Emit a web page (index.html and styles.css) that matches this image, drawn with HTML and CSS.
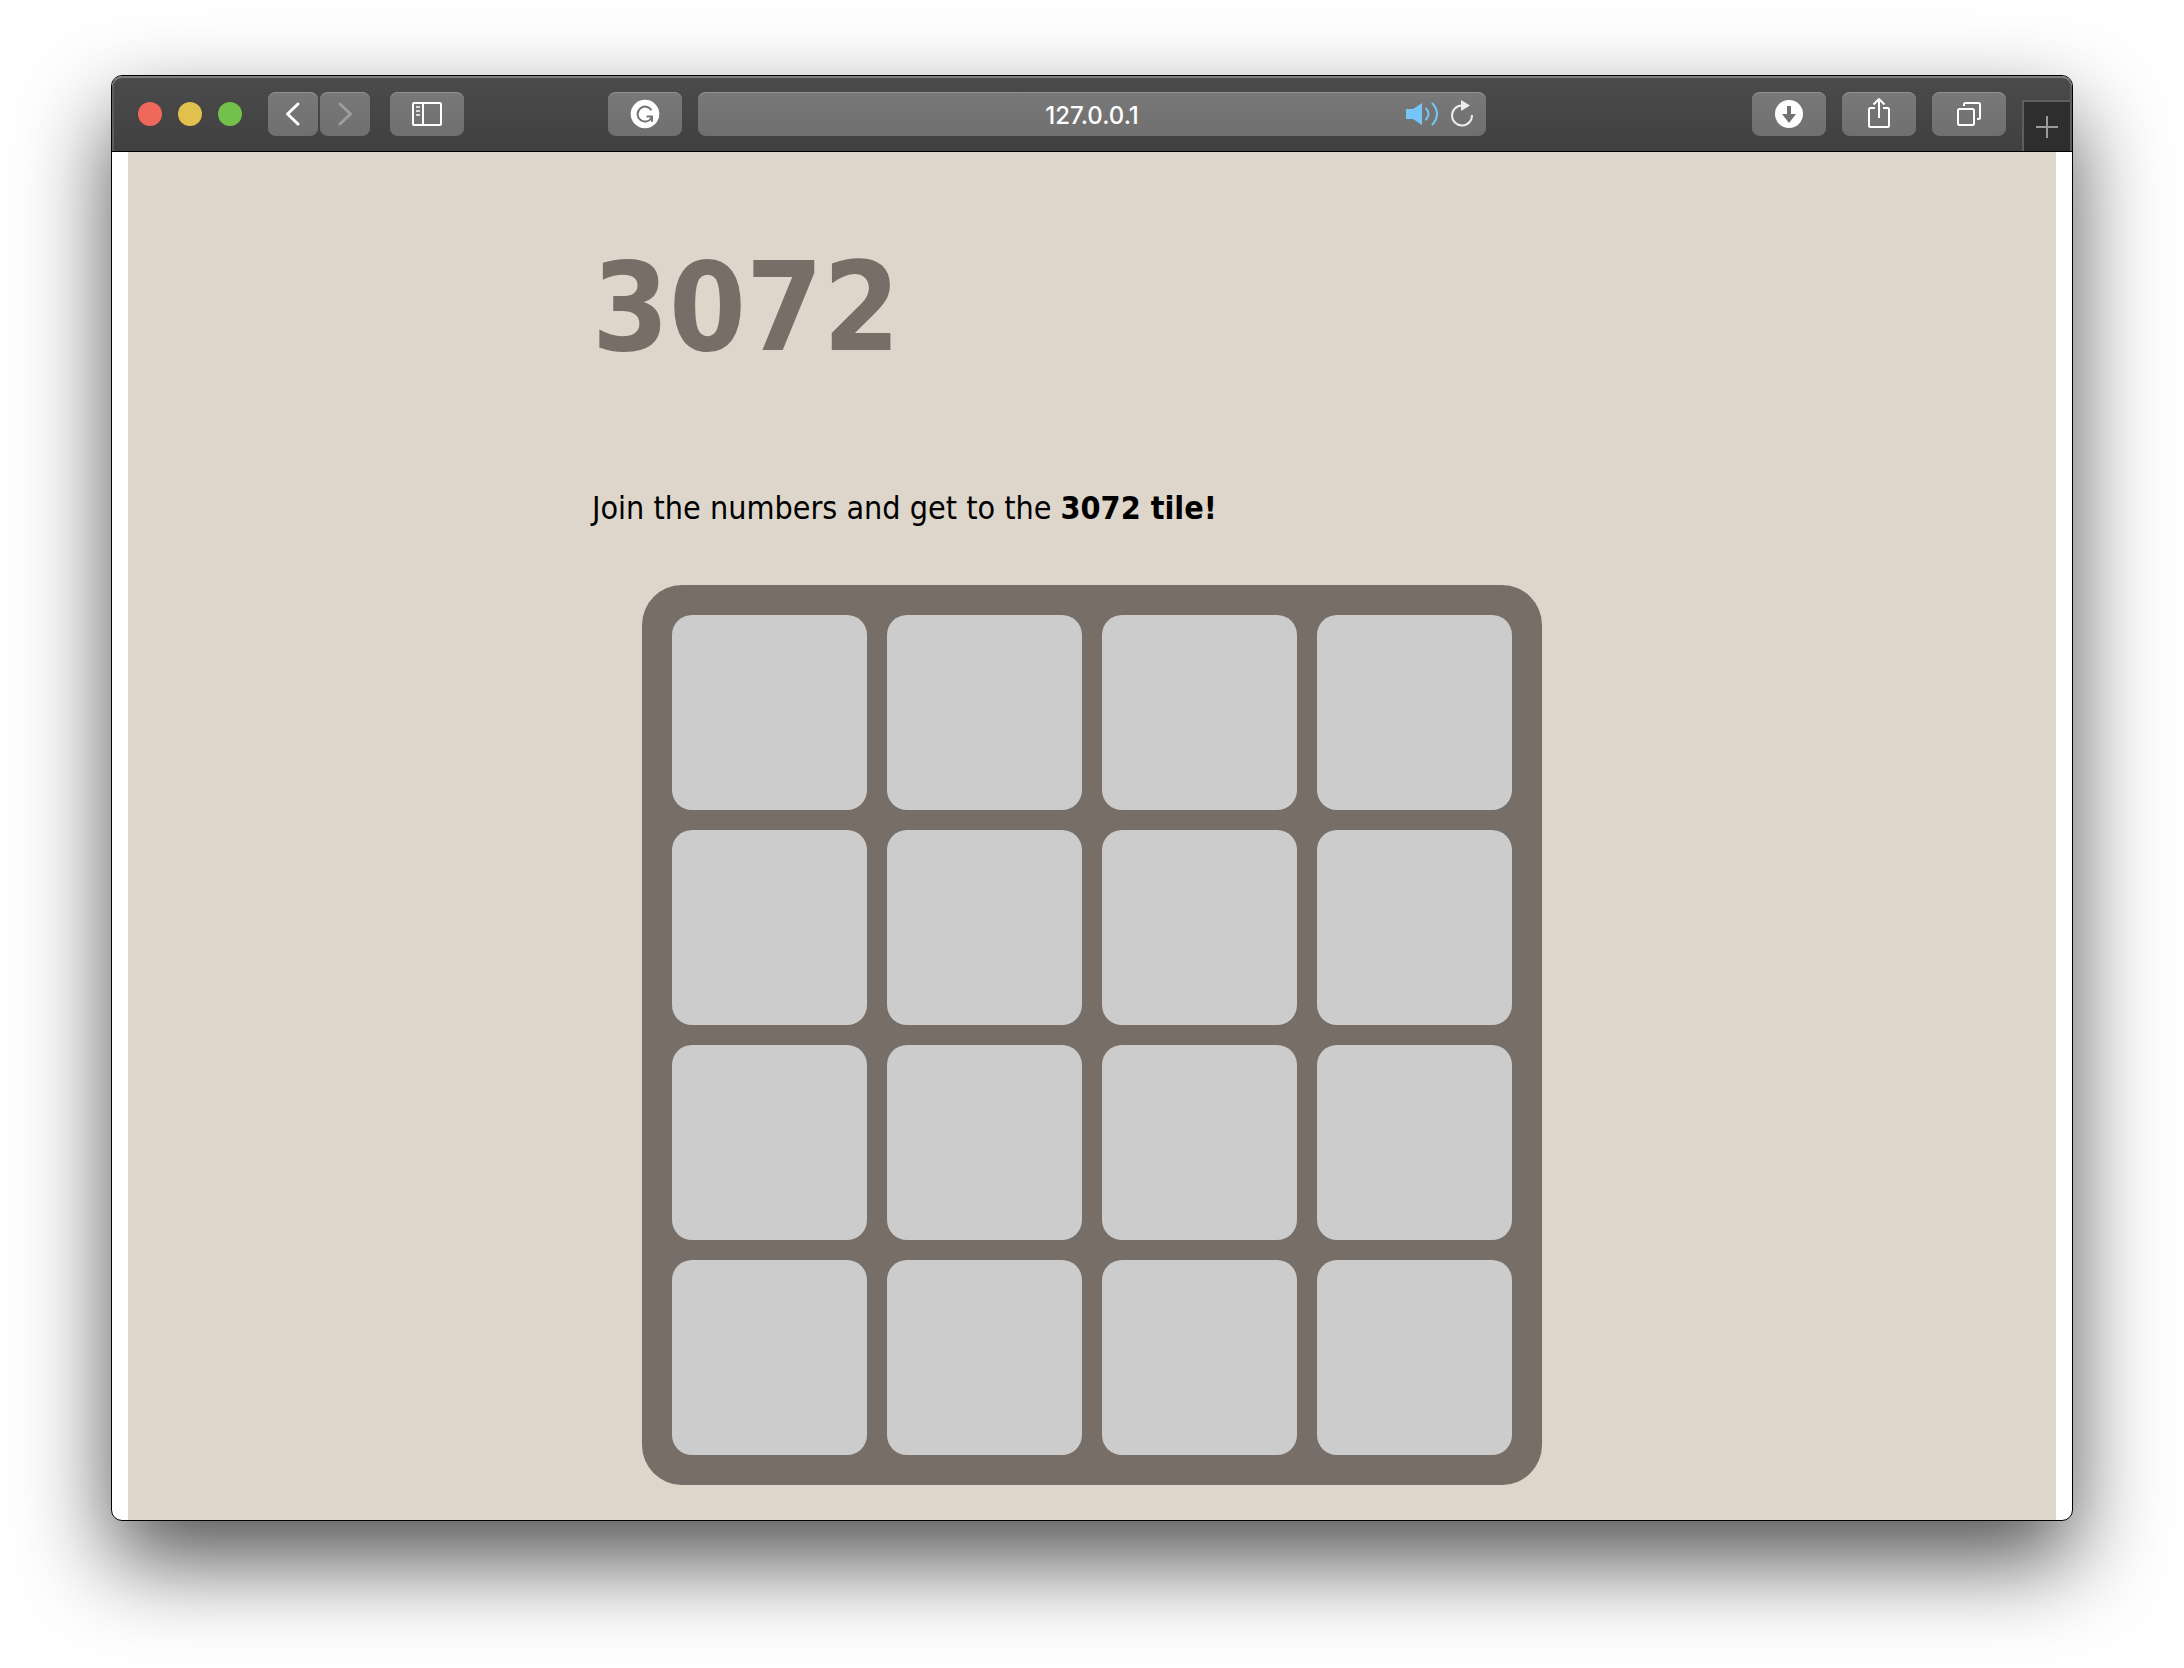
FILE: index.html
```html
<!DOCTYPE html>
<html lang="en">
<head>
<meta charset="utf-8">
<title>3072</title>
<link rel="stylesheet" href="styles.css">
</head>
<body>
<div class="window">
  <header class="toolbar">
    <div class="toolbar-left">
      <div class="lights">
        <button class="light light-close" aria-label="Close"></button>
        <button class="light light-minimize" aria-label="Minimize"></button>
        <button class="light light-zoom" aria-label="Zoom"></button>
      </div>
      <div class="history">
        <button class="tool tool-narrow" aria-label="Back">
          <svg width="50" height="44" viewBox="0 0 50 44" fill="none" stroke="#fff" stroke-width="3" stroke-linecap="round" stroke-linejoin="round"><path d="M30 12 19.500 22 30 32"/></svg>
        </button>
        <button class="tool tool-narrow" aria-label="Forward">
          <svg width="50" height="44" viewBox="0 0 50 44" fill="none" stroke="#9d9d9d" stroke-width="3" stroke-linecap="round" stroke-linejoin="round"><path d="M20 12 30.500 22 20 32"/></svg>
        </button>
      </div>
      <button class="tool" aria-label="Sidebar">
        <svg width="74" height="44" viewBox="0 0 74 44" fill="none" stroke="#fff" stroke-width="2"><rect x="23" y="11" width="28" height="22" rx="1"/><path d="M33 11v22"/><path d="M26 15h4M26 19h4M26 23h4" stroke="#d8d8d8"/></svg>
      </button>
      <button class="tool tool-extension" aria-label="Grammar checker">
        <svg width="74" height="44" viewBox="0 0 74 44"><circle cx="37" cy="22" r="14.300" fill="#fff"/><path d="M43.500 18.200A7.500 7.500 0 1 0 43.500 26M38.500 24.600H44V29.800" fill="none" stroke="#747474" stroke-width="2"/></svg>
      </button>
    </div>
    <div class="address">
      <input class="address-input" type="text" value="127.0.0.1" aria-label="Address">
      <div class="address-actions">
        <button class="bare" aria-label="Mute tab">
          <svg width="34" height="28" viewBox="0 0 34 28"><path d="M0 9h7L16 3v22L7 19H0z" fill="#76c5f8"/><path d="M20 8.500q5 5.500 0 11M26.500 3.500q9 10.500 0 21" fill="none" stroke="#76c5f8" stroke-width="2" stroke-linecap="round"/></svg>
        </button>
        <button class="bare" aria-label="Reload">
          <svg width="24" height="28" viewBox="0 0 24 28"><path d="M12 5.500A10 10 0 1 0 22 15" fill="none" stroke="#ececec" stroke-width="2"/><path d="M11 0v11l9-5.500z" fill="#ececec"/></svg>
        </button>
      </div>
    </div>
    <div class="toolbar-right">
      <button class="tool" aria-label="Downloads">
        <svg width="74" height="44" viewBox="0 0 74 44"><circle cx="37" cy="22" r="14" fill="#fff"/><path d="M35 14h4v8h5l-7 9-7-9h5z" fill="#727272"/></svg>
      </button>
      <button class="tool" aria-label="Share">
        <svg width="74" height="44" viewBox="0 0 74 44" fill="none" stroke="#fff" stroke-width="2" stroke-linejoin="round"><path d="M33 16h-4.500a1.500 1.500 0 0 0-1.500 1.500V33.500a1.500 1.500 0 0 0 1.500 1.500h17a1.500 1.500 0 0 0 1.500-1.500V17.500a1.500 1.500 0 0 0-1.500-1.500H41"/><path d="M37 26V8M31.500 12.500 37 7l5.500 5.500"/></svg>
      </button>
      <button class="tool" aria-label="Show all tabs">
        <svg width="74" height="44" viewBox="0 0 74 44" fill="none" stroke="#fff" stroke-width="2"><rect x="26" y="17" width="16" height="16" rx="1.500"/><path d="M32 14v-1.500a1.500 1.500 0 0 1 1.500-1.500h13a1.500 1.500 0 0 1 1.500 1.500v13a1.500 1.500 0 0 1-1.500 1.500H45"/></svg>
      </button>
      <button class="new-tab" aria-label="New tab">
        <svg width="24" height="24" viewBox="0 0 24 24" stroke="#9a9a9a" stroke-width="2"><path d="M12 1v22M1 12h22"/></svg>
      </button>
    </div>
  </header>
  <main class="page">
    <div class="content">
      <h1 class="title">3072</h1>
      <p class="intro">Join the numbers and get to the <strong>3072 tile!</strong></p>
      <div class="board">
        <div class="cell"></div><div class="cell"></div><div class="cell"></div><div class="cell"></div>
        <div class="cell"></div><div class="cell"></div><div class="cell"></div><div class="cell"></div>
        <div class="cell"></div><div class="cell"></div><div class="cell"></div><div class="cell"></div>
        <div class="cell"></div><div class="cell"></div><div class="cell"></div><div class="cell"></div>
      </div>
    </div>
  </main>
</div>
</body>
</html>
```
FILE: styles.css
```css
* {
  box-sizing: border-box;
}

body {
  display: flex;
  min-height: 100vh;
  margin: 0;
  padding: 75px 111px 147px;
  background: #fff;
  font-family: "DejaVu Sans Condensed", "DejaVu Sans", sans-serif;
}

button {
  padding: 0;
  border: 0;
  background: none;
}

svg {
  display: block;
}

.window {
  display: flex;
  flex: 1;
  flex-direction: column;
  min-width: 0;
  overflow: hidden;
  border: 1px solid #000;
  border-radius: 11px;
  background: #fff;
  box-shadow: 0 40px 90px rgba(0, 0, 0, 0.68);
}

/* Browser toolbar */

.toolbar {
  display: grid;
  grid-template-columns: 586fr 788fr 586fr;
  align-items: center;
  height: 76px;
  border-bottom: 1px solid #000;
  border-radius: 10px 10px 0 0;
  background: linear-gradient(#4b4b4b, #404040);
  box-shadow: inset 0 2px 0 #7e7e7e, inset 2px 0 0 #5e5e5e, inset -2px 0 0 #5e5e5e;
}

.toolbar-left {
  display: flex;
  align-items: center;
  padding: 0 16px 0 26px;
}

.lights {
  display: flex;
  gap: 16px;
  margin-right: 26px;
}

.light {
  width: 24px;
  height: 24px;
  border-radius: 50%;
}

.light-close {
  background: #f0675b;
}

.light-minimize {
  background: #e2c04d;
}

.light-zoom {
  background: #73c04a;
}

.history {
  display: flex;
  gap: 2px;
  margin-right: 20px;
}

.tool,
.address {
  height: 44px;
  border-radius: 8px;
  background: linear-gradient(#787878, #707070);
  box-shadow: inset 0 1px 0 #929292;
}

.tool {
  width: 74px;
}

.tool-narrow {
  width: 50px;
}

.tool-extension {
  margin-left: auto;
}

.address {
  display: grid;
  grid-template-columns: 88px 1fr 88px;
  align-items: center;
}

.address-input {
  grid-column: 2;
  width: 100%;
  padding: 4px 0 0;
  border: 0;
  outline: 0;
  background: none;
  color: #fff;
  font: 500 24px/32px Inter, sans-serif;
  text-align: center;
}

.address-actions {
  display: flex;
  gap: 10px;
  padding-left: 8px;
}

.toolbar-right {
  display: flex;
  align-items: center;
  align-self: stretch;
  justify-content: flex-end;
  gap: 16px;
}

.new-tab {
  display: grid;
  place-items: center;
  align-self: flex-end;
  width: 50px;
  height: 51px;
  border: 2px solid #5e5e5e;
  border-bottom: 0;
  background: #2e2e2e;
}

/* Game page */

.page {
  flex: 1;
  margin: 0 16px;
  padding: 86px 16px 35px;
  background: #ded6ca;
}

.content {
  max-width: 1000px;
  margin: 0 auto;
}

.title {
  margin: 0 0 110px;
  color: #776e67;
  font-size: 123px;
  line-height: 140px;
}

.intro {
  margin: 0 0 57px;
  color: #000;
  font-size: 32px;
  line-height: 40px;
}

.board {
  display: grid;
  grid-template-columns: repeat(4, 1fr);
  gap: 20px;
  max-width: 900px;
  margin: 0 auto;
  padding: 30px;
  border-radius: 40px;
  background: #776e67;
}

.cell {
  aspect-ratio: 1;
  border-radius: 20px;
  background: #ccc;
}
```
